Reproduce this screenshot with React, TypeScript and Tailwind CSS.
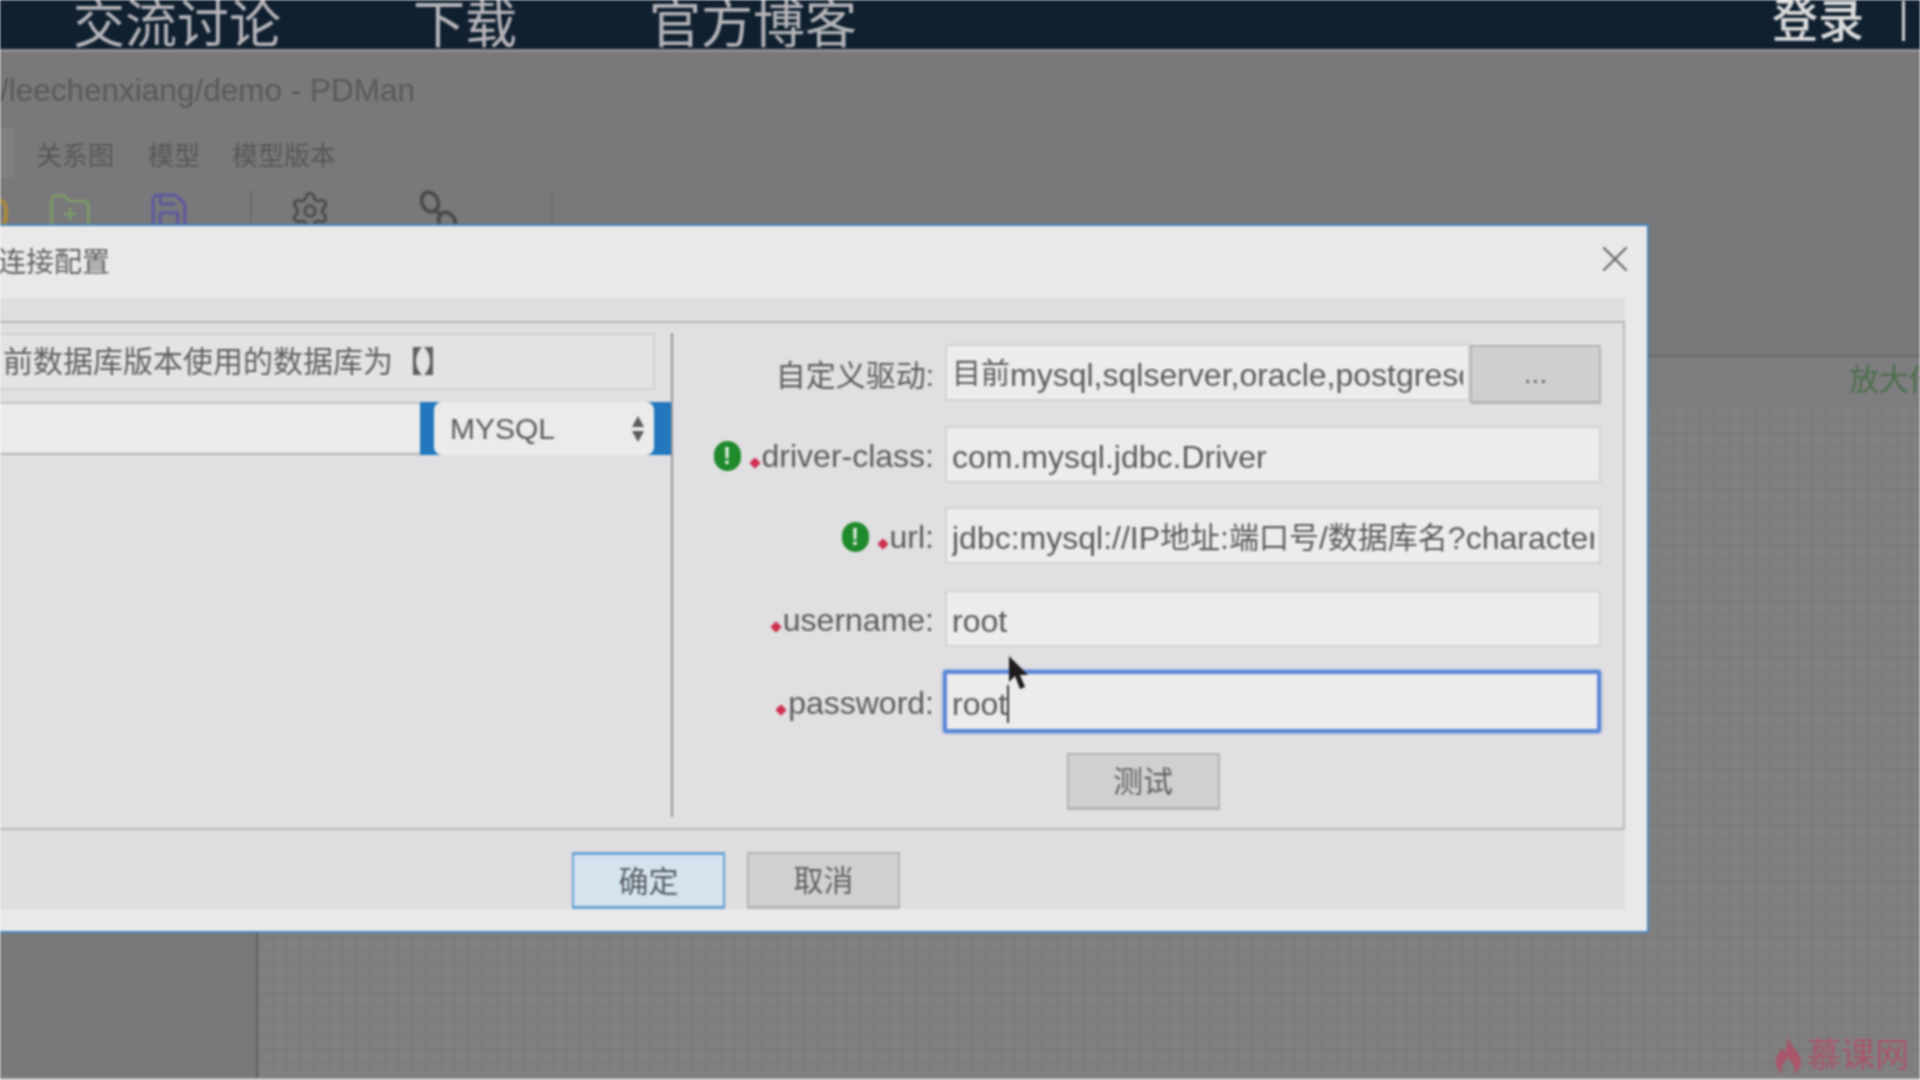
import { FolderPlus, Save, Settings, X } from 'lucide-react';

const FONT = "font-['Liberation_Sans','Noto_Sans_CJK_SC',sans-serif]";

function Warn() {
  return (
    <span className="flex h-[30px] w-[27px] items-center justify-center rounded-full bg-[#1f8a2c] text-[24px] font-bold leading-none text-[#e6efe4]">
      !
    </span>
  );
}

function Star() {
  return <span className="mx-[3px] h-[8px] w-[8px] translate-y-[7px] rotate-45 rounded-[1px] bg-[#cf2f4f]" />;
}

function Label({ warn, star, text, className = '', textClass = 'text-[32px]' }: { warn?: boolean; star?: boolean; text: string; className?: string; textClass?: string }) {
  return (
    <div className={`flex w-[272px] shrink-0 items-center justify-end pr-[11px] pt-[3px] text-[#5c5c5e] ${className}`}>
      {warn && (
        <span className="mr-[7px]">
          <Warn />
        </span>
      )}
      {star && <Star />}
      <span className={textClass}>{text}</span>
    </div>
  );
}

function TextBox({ children, className = '' }: { children: React.ReactNode; className?: string }) {
  return (
    <div className={`h-[57px] border-2 border-[#d2d2d3] bg-[#ececec] px-[5px] ${className}`}>
      <div className="flex h-full items-center overflow-hidden whitespace-pre pt-[4px] text-[32px] text-[#5a5a5c]">
        {children}
      </div>
    </div>
  );
}

function DialogButton({ text, primary }: { text: string; primary?: boolean }) {
  return (
    <button
      type="button"
      className={`h-[57px] w-[153px] border-2 pt-[1px] text-[30px] ${
        primary
          ? 'border-[#6aa3d6] border-y-[3px] bg-[#d5e3ef] text-[#5a5f64]'
          : 'border-[#b4b4b5] border-b-[3px] bg-[#d0d0d2] text-[#626264]'
      }`}
    >
      {text}
    </button>
  );
}

function LinkIcon() {
  return (
    <svg width="40" height="44" viewBox="0 0 40 44" fill="none" stroke="#4c4c4e" strokeWidth="4">
      <ellipse cx="11" cy="12" rx="8" ry="10" transform="rotate(-25 11 12)" />
      <ellipse cx="28" cy="32" rx="8" ry="10" transform="rotate(-25 28 32)" />
      <path d="M15 20l9 5" />
    </svg>
  );
}

function Background() {
  return (
    <div className="flex h-full flex-col">
      <div className="flex h-[49px] shrink-0 items-center justify-between overflow-hidden bg-[#10202f]">
        <div className="flex items-center text-[52px] leading-none text-[#b5b4b9]">
          <span className="ml-[73px]">交流讨论</span>
          <span className="ml-[132px]">下载</span>
          <span className="ml-[132px]">官方博客</span>
        </div>
        <div className="flex -translate-y-[4px] items-center text-[46px] font-medium leading-none text-[#dcdcdc]">
          <span>登录</span>
          <span className="ml-[38px] mr-[15px] h-[40px] w-[3px] bg-[#d0d0d0]" />
        </div>
      </div>
      <div className="h-[3px] shrink-0 bg-[#8f8d92]" />
      <div className="flex h-[76px] shrink-0 items-center pt-[1px] text-[31.5px] text-[#59585b]">/leechenxiang/demo - PDMan</div>
      <div className="flex h-[50px] shrink-0 items-center text-[26px] text-[#575659]">
        <span className="h-full w-[14px] bg-[#807f81]" />
        <span className="ml-[22px] pt-[7px]">关系图</span>
        <span className="ml-[34px] pt-[7px]">模型</span>
        <span className="ml-[32px] pt-[7px]">模型版本</span>
      </div>
      <div className="flex h-[177px] shrink-0 items-start pt-[12px]">
        <span className="-ml-[12px] mt-[8px] h-[30px] w-[20px] rounded-full border-[4px] border-[#a98a3e]" />
        <FolderPlus size={44} strokeWidth={1.5} className="ml-[40px] text-[#7d9a68]" />
        <Save size={42} strokeWidth={1.8} className="ml-[56px] text-[#5d5a9e]" />
        <span className="ml-[60px] h-[60px] w-[2px] bg-[#6c6b6d]" />
        <Settings size={42} strokeWidth={1.8} className="ml-[37px] text-[#4f4f51]" />
        <span className="ml-[88px]">
          <LinkIcon />
        </span>
        <span className="ml-[92px] h-[60px] w-[2px] bg-[#6c6b6d]" />
      </div>
      <div className="flex h-[50px] shrink-0 items-center justify-end overflow-hidden border-t-2 border-[#676668] bg-[#7e7d7f]">
        <span className="-mr-[19px] -translate-y-[2px] text-[30px] text-[#4c6f4c]">放大倍</span>
      </div>
      <div className="flex min-h-0 flex-1 border-b-2 border-[#b3b3b3]">
        <div className="w-[258px] shrink-0 border-r-2 border-[#626163]" />
        <div className="flex-1 bg-[#808081] bg-[linear-gradient(to_right,#78787a_1px,transparent_1px),linear-gradient(to_bottom,#78787a_1px,transparent_1px)] bg-[size:14px_14px]" />
      </div>
    </div>
  );
}

function Dialog() {
  return (
    <div className="absolute left-[-60px] top-[224px] flex h-[709px] w-[1709px] flex-col border-2 border-[#4a87c0] bg-[#e9e9ea]">
      <div className="flex h-[72px] shrink-0 items-center justify-between pl-[56px] pr-[10px] text-[28px] text-[#626264]">
        <span className="pt-[2px]">连接配置</span>
        <X size={44} strokeWidth={1.2} className="-translate-y-[3px] text-[#69696b]" />
      </div>
      <div className="mr-[22px] flex h-[611px] shrink-0 flex-col bg-[#dedddf]">
        <div className="h-[23px] shrink-0 bg-[#dedddf]" />
        <div className="flex h-[509px] shrink-0 border-y-2 border-r-2 border-[#b7b7b8] bg-[#e0dfe1] pb-[11px] pt-[10px]">
          <div className="flex w-[731px] shrink-0 flex-col border-r-2 border-[#98989a]">
            <div className="mr-[16px] flex h-[57px] shrink-0 items-center border-2 border-[#d0d0d1] bg-[#e3e3e4] pl-[29px] text-[30px] text-[#5f5f61]">
              目前数据库版本使用的数据库为【】
            </div>
            <div className="mt-[12px] flex h-[53px] border-y-2 border-t-[#c2c2c3] border-b-[#b5b5b6] bg-[#ebebeb]">
              <div className="flex-1" />
              <div className="-my-[2px] flex w-[251px] bg-[#2277bd] pl-[14px] pr-[17px]">
                <div className="flex flex-1 items-center justify-between rounded-[8px] bg-[#ebebeb] pl-[16px] pr-[9px] text-[30px] text-[#5c5c5e]">
                  <span>MYSQL</span>
                  <svg width="14" height="30" viewBox="0 0 14 30" fill="#5a5a5c">
                    <path d="M7 2l6 11H1z" />
                    <path d="M7 28l6-11H1z" />
                  </svg>
                </div>
              </div>
            </div>
          </div>
          <div className="flex min-w-0 flex-1 flex-col pr-[22px] pt-[11px]">
            <div className="flex h-[59px] shrink-0">
              <Label text="自定义驱动:" textClass="text-[30px]" />
              <TextBox className="w-[525px]">
                <span className="text-[29px]">目前</span>mysql,sqlserver,oracle,postgresql
              </TextBox>
              <button
                type="button"
                className="mt-[1px] h-[59px] flex-1 border-2 border-b-[3px] border-[#b4b4b5] bg-[#cfcfd1] text-[28px] text-[#666668]"
              >
                ...
              </button>
            </div>
            <div className="mt-[23px] flex shrink-0">
              <Label warn star text="driver-class:" />
              <TextBox className="flex-1">com.mysql.jdbc.Driver</TextBox>
            </div>
            <div className="mt-[24px] flex shrink-0">
              <Label warn star text="url:" />
              <TextBox className="min-w-0 flex-1">
                jdbc:mysql://IP<span className="text-[30px]">地址</span>:<span className="text-[30px]">端口号</span>/
                <span className="text-[30px]">数据库名</span>?characterEncoding=UTF-8
              </TextBox>
            </div>
            <div className="mt-[26px] flex shrink-0">
              <Label star text="username:" />
              <TextBox className="flex-1">root</TextBox>
            </div>
            <div className="mt-[23px] flex shrink-0 items-center">
              <Label star text="password:" className="-mr-[2px]" />
              <div className="flex h-[63px] flex-1 items-center rounded-[3px] border-[4px] border-[#5b87d8] bg-[#ececec] pl-[5px] pt-[4px] text-[32px] text-[#5a5a5c] shadow-[0_0_3px_#5b87d8]">
                root
                <span className="h-[38px] w-[2px] bg-[#3a3a3c]" />
              </div>
            </div>
            <div className="mt-[20px] flex shrink-0 justify-center pl-[12px]">
              <DialogButton text="测试" />
            </div>
          </div>
        </div>
        <div className="flex flex-1 items-end gap-[22px] pl-[630px]">
          <DialogButton text="确定" primary />
          <DialogButton text="取消" />
        </div>
      </div>
    </div>
  );
}

export default function App() {
  return (
    <div className={`relative h-screen w-full overflow-hidden bg-[#79787a] blur-[0.8px] ${FONT}`}>
      <Background />
      <Dialog />
      {/* mouse pointer */}
      <svg className="absolute left-[1007px] top-[655px]" width="22" height="36" viewBox="0 0 22 36" fill="#1d1d1f">
        <path d="M2 1v26l6-6 5 13 5-2-5-12h8z" />
      </svg>
      {/* watermark */}
      <div className="absolute right-[11px] top-[1035px] flex items-center gap-[6px] text-[34px] leading-none text-[#a8566a]">
        <svg width="25" height="39" viewBox="0 0 25 39" fill="#a8566a" fillRule="evenodd">
          <path d="M12 0c1 7 4 10 7 14 3 4 6 8 6 13 0 6-4 10-8 12 2-3 2-7-1-11-1-2-3-3-4-6-1 3-3 4-4 6-3 4-3 8-1 11-4-2-7-6-7-12 0-6 4-10 6-14 1 2 2 3 3 4 2-5 3-11 3-17z" />
        </svg>
        <span>慕课网</span>
      </div>
    </div>
  );
}
